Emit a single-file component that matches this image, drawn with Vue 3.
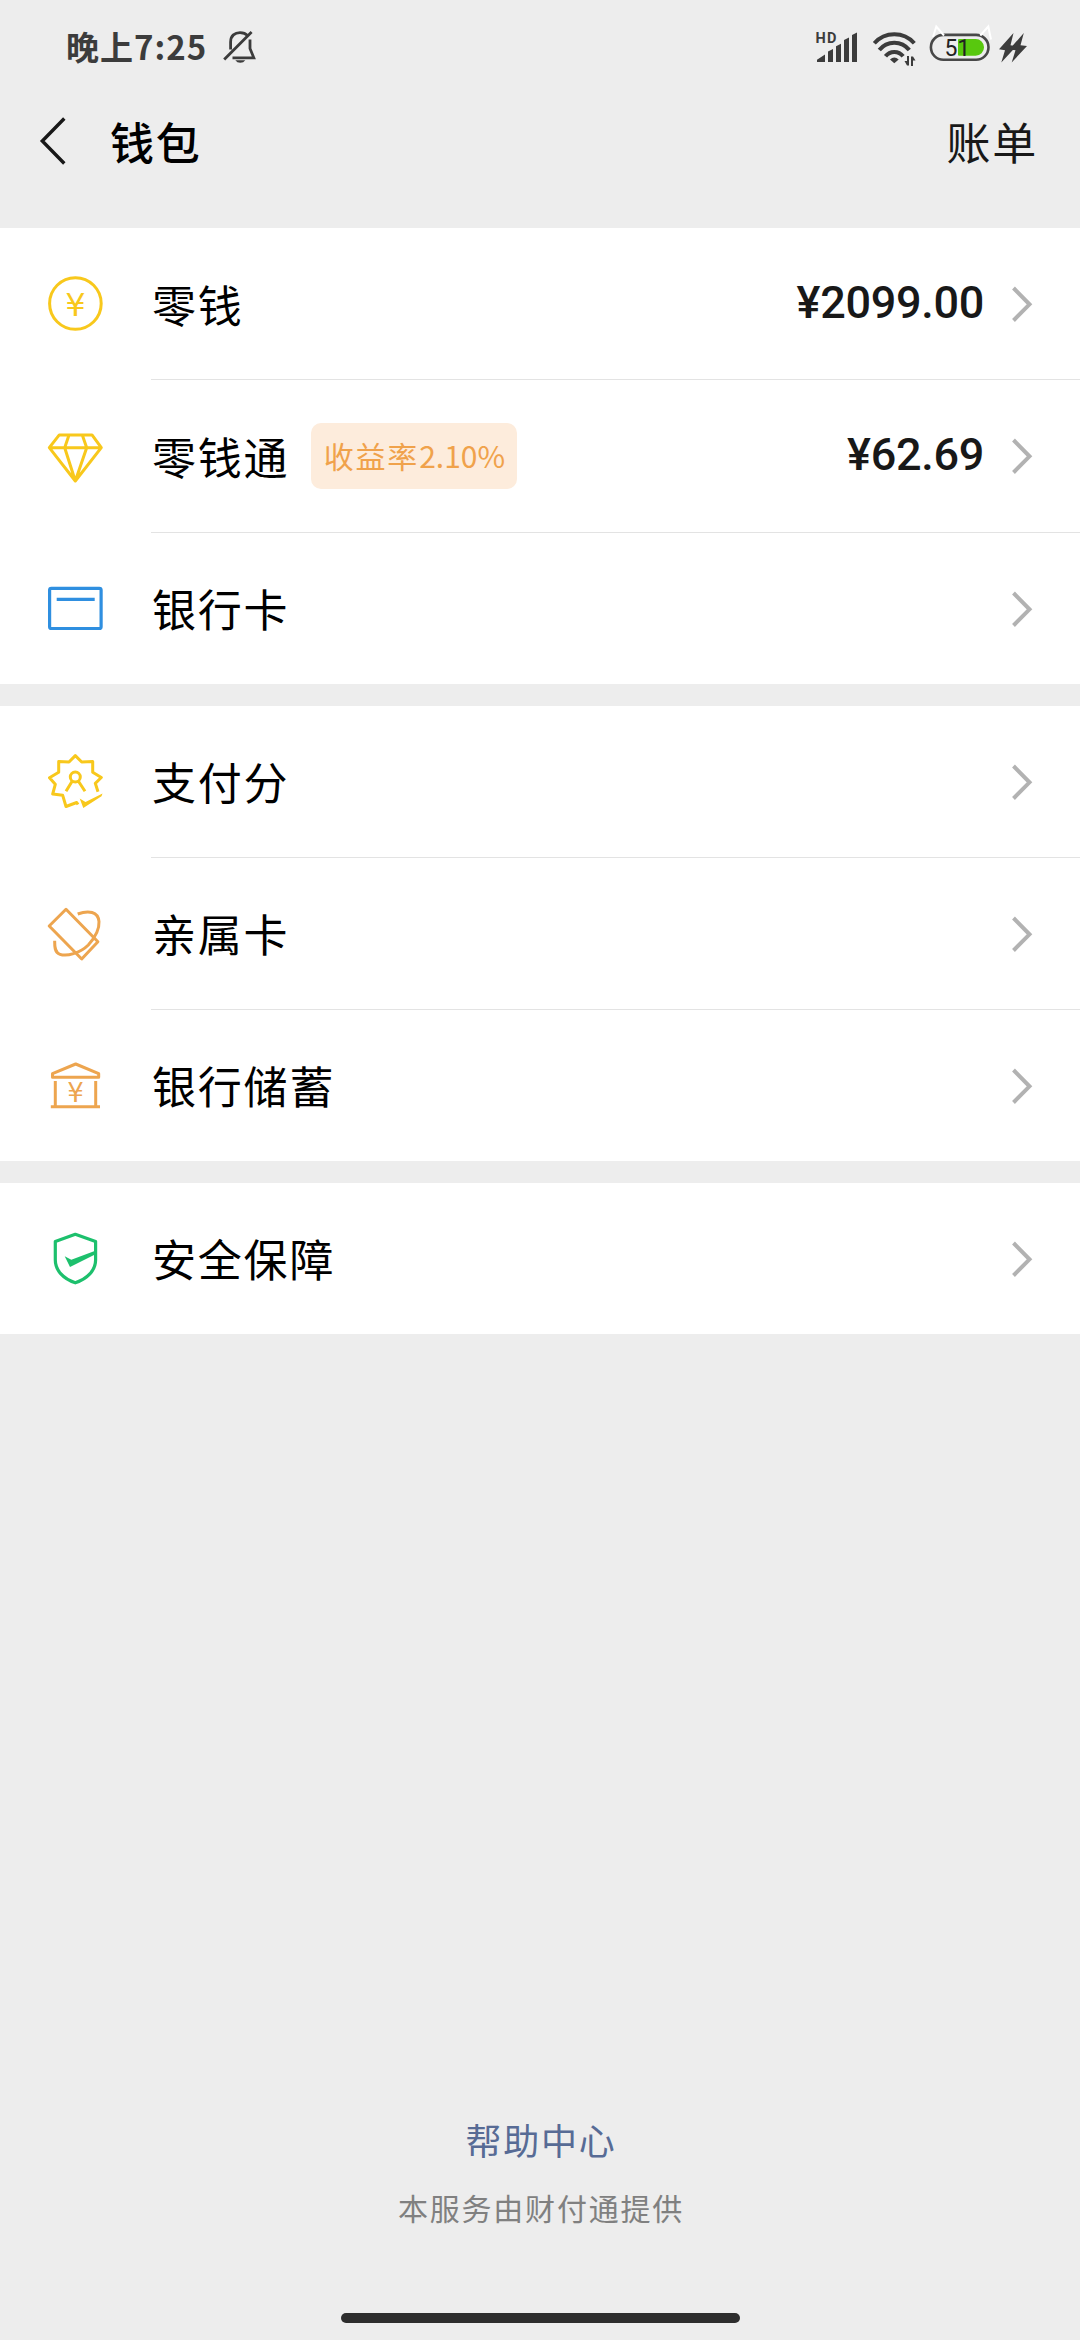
<script setup>
const groups = [
  [
    { id: 'balance', label: '零钱', amount: '¥2099.00' },
    { id: 'fund', label: '零钱通', amount: '¥62.69', badge: ['收益率', '2.10%'] },
    { id: 'card', label: '银行卡' },
  ],
  [
    { id: 'score', label: '支付分' },
    { id: 'family', label: '亲属卡' },
    { id: 'savings', label: '银行储蓄' },
  ],
  [{ id: 'security', label: '安全保障' }],
]
</script>

<template>
  <div class="page">
    <div class="status">
      <span class="clock">晚上7:25</span>
      <svg class="bell" viewBox="0 0 34 34" width="34" height="34">
        <path d="M8.6 19.5V12C8.6 5.5 13 2.6 18 2.6c3.200 0 5.800 1 7.600 3M28 9.500V18.500L31.800 27.800H10.500M2.200 29.600L29.600 2" />
        <path class="solid" d="M13.300 30.200H23.300Q21.500 32.800 18.300 32.800T13.300 30.200Z" />
      </svg>
      <div class="indicators">
        <svg class="signal" viewBox="0 0 44 42" width="44" height="42">
          <text x="0.500" y="18.600">HD</text>
          <path d="M2 38V35.800L10 30.600V38ZM13 38V27.500L18 25V38ZM21 38V22.200L26 19.700V38ZM29 38V16L34 13.500V38ZM37 38V11L42 8.600V38Z" />
        </svg>
        <svg class="wifi" viewBox="0 0 46 42" width="46" height="42">
          <path class="arc" d="M3.300 19.300A26.700 26.700 0 0 1 43.300 19.300M8.300 26A19 19 0 0 1 38.300 26M14.500 32.300A11 11 0 0 1 32.100 32.300" />
          <path d="M19 35.500Q23.300 31.500 27.700 35.500L23.300 39.300Z" />
          <path d="M36 32h2v9.500h-2l-2.500-4.500H36ZM40 32.500h2l2.500 4H42V42h-2Z" />
        </svg>
        <svg class="battery" viewBox="0 0 68 42" width="68" height="42">
          <rect class="shell" x="5.900" y="10.900" width="57.600" height="24.800" rx="12.400" />
          <path class="charge" d="M34 15H50.700a8.300 8.300 0 0 1 0 16.700H34q-1 0-1-1V16q0-1 1-1Z" />
          <path class="ears" d="M8 13L11.300 2.500L19 11.500M55.300 11.500L63.300 2.500L66 15.500" />
          <text x="19.600" y="32">5</text>
          <text x="32.200" y="32">1</text>
        </svg>
        <svg class="bolt" viewBox="0 0 36 42" width="36" height="42">
          <path d="M18.500 9L4 25.300L10 26.300L6.300 38.500L21.300 22.300L15.500 21.300ZM28.800 9L14.500 25.300L20.500 26.300L16.700 38.500L32 22L25.500 21.300Z" />
        </svg>
      </div>
    </div>

    <header class="nav">
      <svg class="back" viewBox="0 0 28 50" width="28" height="50">
        <path d="M25.300 2.500L3.300 25L25.300 47.500" />
      </svg>
      <h1>钱包</h1>
      <span class="bills">账单</span>
    </header>

    <main>
      <section v-for="(group, g) in groups" :key="g" class="group">
        <div v-for="row in group" :key="row.id" class="row" :class="row.id">
          <svg class="icon" viewBox="0 0 61 61" width="61" height="61">
            <template v-if="row.id === 'balance'">
              <circle cx="30.400" cy="30.500" r="25.800" />
              <text class="yen" x="30.400" y="42.500" font-size="32">¥</text>
            </template>
            <template v-else-if="row.id === 'fund'">
              <path d="M14.300 9.900H47L56.300 22.700L30.300 56L4.300 22.700ZM4.300 22.700H56.300M24 9.900L19.700 22.700L30.300 56L41.700 22.700L37.300 9.900" />
            </template>
            <template v-else-if="row.id === 'card'">
              <rect x="4.600" y="10.300" width="51.500" height="40.200" rx="1.800" />
              <path d="M11.700 21.300H49.700" />
            </template>
            <template v-else-if="row.id === 'score'">
              <path d="M53 40.700L50.300 32.300L56.300 26.500L47.700 21.300V10.600L36.700 11L30.300 4.600L24 11L13.700 10.600V21.300L4.500 26.700L10.300 33.300L7.700 43L17.700 44.300L21 55.500L31.700 51.500L33 53.500" />
              <circle cx="30.300" cy="26" r="5" />
              <path d="M27 30.500L21 40.300M33.600 30.500L40 40.300" />
              <path class="solid" d="M34.700 47.500L40.500 51L57.500 42.500L56.500 45.300L38.300 57Z" />
            </template>
            <template v-else-if="row.id === 'family'">
              <path d="M21 6.300L52.900 38.700L36.700 56L4.200 23Z" />
              <path d="M32.700 11C43.300 7 53.300 8.300 54 18.700C54.500 27 48.500 36.300 43.300 42C35 50.300 21.700 53.700 15 51.300C9 49.300 9.700 42 9.700 37.700" />
            </template>
            <template v-else-if="row.id === 'savings'">
              <path d="M7.500 22.300V18.700L30.700 9L53.700 18.700V22.300ZM10.300 26V51M50.700 26V51M5.800 51.800H55" />
              <text class="yen" x="30.500" y="46.700" font-size="26">¥</text>
            </template>
            <template v-else>
              <path d="M30.300 6.300L50.600 13.500V32C50.600 42.500 42 51 30.300 54.800C18.500 51 10.300 42.500 10.300 32V13.500Z" />
              <path class="solid" d="M19.700 28.300L26.300 31.800L51 22.500V26L25 39Z" />
            </template>
          </svg>
          <div class="body">
            <span class="label">{{ row.label }}</span>
            <span v-if="row.badge" class="badge"><span class="han">{{ row.badge[0] }}</span>{{ row.badge[1] }}</span>
            <span v-if="row.amount" class="amount">{{ row.amount }}</span>
            <svg class="chevron" viewBox="0 0 22 38" width="22" height="38">
              <path d="M2.500 3L18.500 19.300L2.500 35.500" />
            </svg>
          </div>
        </div>
      </section>
    </main>

    <footer>
      <span class="help">帮助中心</span>
      <span class="provider">本服务由财付通提供</span>
      <div class="home"></div>
    </footer>
  </div>
</template>

<style>
body {
  background: #ededed;
}
</style>

<style scoped>
.page {
  width: 1080px;
  height: 2340px;
  overflow: hidden;
  display: flex;
  flex-direction: column;
  background: #ededed;
  font-family: "Noto Sans CJK SC", sans-serif;
  color: #000;
}
svg {
  display: block;
  flex: none;
}
.status {
  height: 90px;
  box-sizing: border-box;
  padding: 0 49px 0 66px;
  display: flex;
  align-items: center;
  color: #3c3c3c;
}
.clock {
  font-size: 33px;
  font-weight: 700;
  letter-spacing: 1px;
  line-height: 48px;
  padding-top: 2px;
}
.bell {
  margin-left: 15px;
  margin-top: 4px;
  fill: none;
  stroke: #3c3c3c;
  stroke-width: 2.800;
}
.bell .solid {
  fill: #3c3c3c;
  stroke: none;
}
.indicators {
  margin-left: auto;
  display: flex;
  fill: #3c3c3c;
}
.signal text {
  font: 700 14.500px Roboto, sans-serif;
  letter-spacing: 1.200px;
}
.wifi {
  margin-left: 12px;
}
.wifi .arc {
  fill: none;
  stroke: #3c3c3c;
  stroke-width: 4;
}
.battery {
  margin-left: 8px;
}
.battery .shell {
  fill: none;
  stroke: #484848;
  stroke-width: 2.600;
}
.battery .charge {
  fill: #58c80e;
}
.battery .ears {
  fill: none;
  stroke: #fff;
  stroke-width: 2;
}
.battery text {
  font: 400 23px Roboto, sans-serif;
  fill: #222;
}
.bolt {
  margin-left: 2px;
}
.nav {
  height: 138px;
  box-sizing: border-box;
  padding: 0 42px 36px 39px;
  display: flex;
  align-items: center;
}
.back {
  fill: none;
  stroke: #181818;
  stroke-width: 3.400;
}
h1 {
  margin: 0 0 0 43px;
  font-size: 44px;
  font-weight: 500;
  letter-spacing: 1.800px;
  line-height: 64px;
}
.bills {
  margin-left: auto;
  font-size: 44px;
  letter-spacing: 1.800px;
  line-height: 64px;
  color: #181818;
}
.group {
  background: #fff;
  margin-bottom: 22px;
}
.row {
  height: 151px;
  display: flex;
  align-items: center;
  padding-left: 45px;
}
.row + .row {
  height: 152px;
}
.row.fund {
  height: 153px;
}
.icon {
  fill: none;
  stroke: currentColor;
  stroke-width: 3;
  stroke-linejoin: round;
}
.icon .solid,
.icon .yen {
  fill: currentColor;
  stroke: none;
}
.yen {
  font-family: "DejaVu Sans", sans-serif;
  text-anchor: middle;
}
.balance .icon,
.fund .icon,
.score .icon {
  color: #f8c81c;
}
.card .icon {
  color: #2f8fe0;
  stroke-width: 3.200;
}
.family .icon,
.savings .icon {
  color: #eda54f;
}
.security .icon {
  color: #1dc06d;
  stroke-width: 3.200;
}
.body {
  flex: 1;
  align-self: stretch;
  margin-left: 45px;
  padding-left: 1px;
  padding-right: 47px;
  display: flex;
  align-items: center;
}
.row + .row .body {
  border-top: 1px solid #e3e3e3;
}
.label {
  font-size: 44px;
  line-height: 64px;
  letter-spacing: 1.800px;
  padding-bottom: 2px;
}
.balance .label,
.fund .label {
  padding-bottom: 0;
}
.badge {
  margin-left: 22px;
  width: 206px;
  height: 66px;
  box-sizing: border-box;
  border-radius: 10px;
  background: #fdecdc;
  color: #f0a24b;
  font-size: 30px;
  line-height: 64px;
  text-align: center;
  white-space: nowrap;
}
.badge .han {
  letter-spacing: 1.800px;
}
.amount {
  margin-left: auto;
  margin-right: 27px;
  padding-bottom: 2px;
  font-family: Roboto, sans-serif;
  font-size: 45px;
  font-weight: 500;
  letter-spacing: -0.300px;
  line-height: 60px;
  color: #181818;
}
.chevron {
  fill: none;
  stroke: #b2b2b2;
  stroke-width: 4;
}
.label:nth-last-child(2) {
  margin-right: auto;
}
footer {
  margin-top: auto;
  display: flex;
  flex-direction: column;
  align-items: center;
}
.help {
  padding-left: 2px;
  font-size: 36px;
  line-height: 52px;
  letter-spacing: 1.700px;
  color: #576b95;
}
.provider {
  margin-top: 20px;
  padding-left: 2px;
  font-size: 30px;
  line-height: 44px;
  letter-spacing: 1.800px;
  color: #808080;
}
.home {
  width: 399px;
  height: 10px;
  margin: 84px 0 17px;
  border-radius: 5px;
  background: #2d2d2d;
}
</style>
